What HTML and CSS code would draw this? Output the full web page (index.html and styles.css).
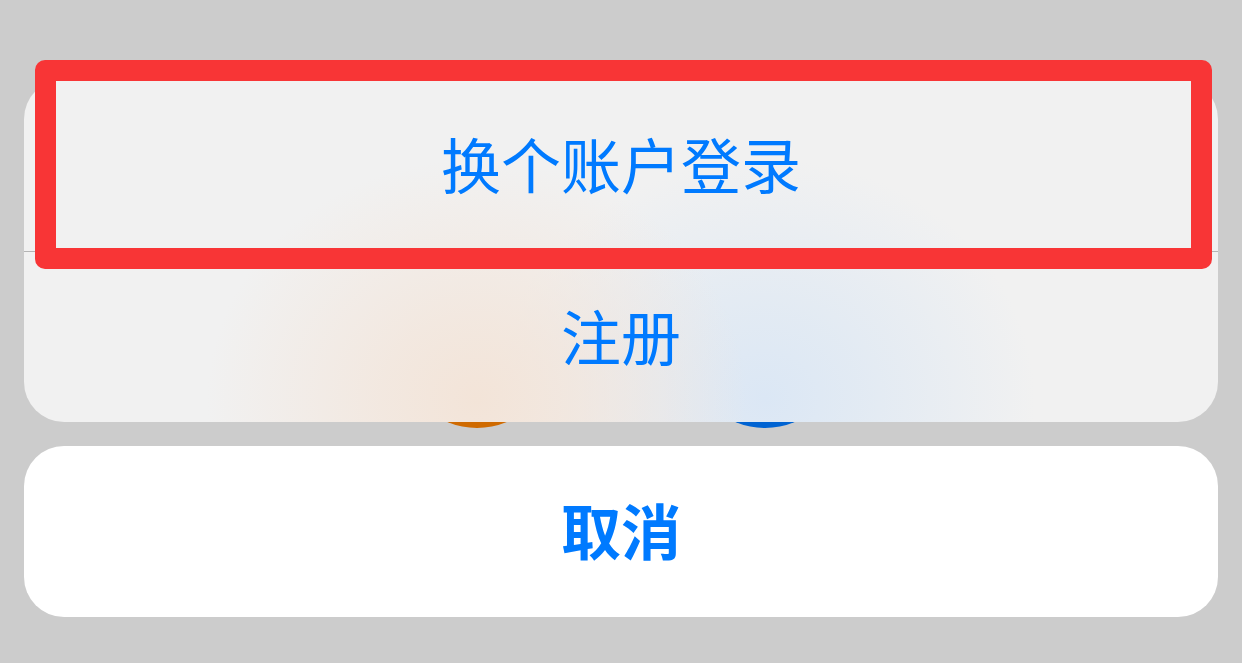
FILE: index.html
```html
<!DOCTYPE html>
<html lang="zh-CN">
<head>
<meta charset="utf-8">
<title>换个账户登录</title>
<link rel="stylesheet" href="styles.css">
</head>
<body>
<div class="screen">
  <!-- icons of the page beneath the sheet -->
  <div class="app-icon orange"></div>
  <div class="app-icon blue"></div>

  <div class="sheet">
    <div class="group">
      <div class="action">换个账户登录</div>
      <div class="action">注册</div>
    </div>
    <div class="cancel">取消</div>
  </div>

  <div class="highlight"></div>
</div>
</body>
</html>
```

FILE: styles.css
```css
body {
  margin: 0;
  background-color: #cccccc;
  font-family: "Noto Sans CJK SC", "Noto Sans", sans-serif;
}
.screen {
  position: relative;
  width: 1242px;
  height: 663px;
  overflow: hidden;
}
.app-icon {
  position: absolute;
  top: 276px;
  width: 152px;
  height: 152px;
  border-radius: 50%;
}
.orange {
  left: 401px;
  background-color: #cf6a00;
}
.blue {
  left: 689px;
  background-color: #0063d2;
}
.sheet {
  position: relative;
  padding: 79px 24px 0 24px;
  display: flex;
  flex-direction: column;
  gap: 24px;
}
.group {
  border-radius: 40px;
  overflow: hidden;
  background:
    radial-gradient(ellipse 270px 240px at 453px 320px, #f3e4d8 0%, rgba(243, 229, 218, 0.75) 35%, rgba(241, 241, 241, 0) 100%),
    radial-gradient(ellipse 270px 240px at 741px 320px, #dbe7f5 0%, rgba(221, 232, 244, 0.75) 35%, rgba(241, 241, 241, 0) 100%),
    #f1f1f1;
}
.action {
  height: 172px;
  box-sizing: border-box;
  padding-bottom: 6px;
  display: flex;
  align-items: center;
  justify-content: center;
  font-size: 60px;
  color: #007aff;
}
.action + .action {
  border-top: 1px solid #b4b4b4;
  height: 171px;
}
.cancel {
  height: 171px;
  box-sizing: border-box;
  padding-bottom: 7px;
  border-radius: 40px;
  background-color: #ffffff;
  display: flex;
  align-items: center;
  justify-content: center;
  font-size: 60px;
  font-weight: 700;
  color: #007aff;
}
.highlight {
  position: absolute;
  left: 35px;
  top: 60px;
  width: 1135px;
  height: 167px;
  border: 21px solid #f83536;
  border-radius: 10px;
}
```
